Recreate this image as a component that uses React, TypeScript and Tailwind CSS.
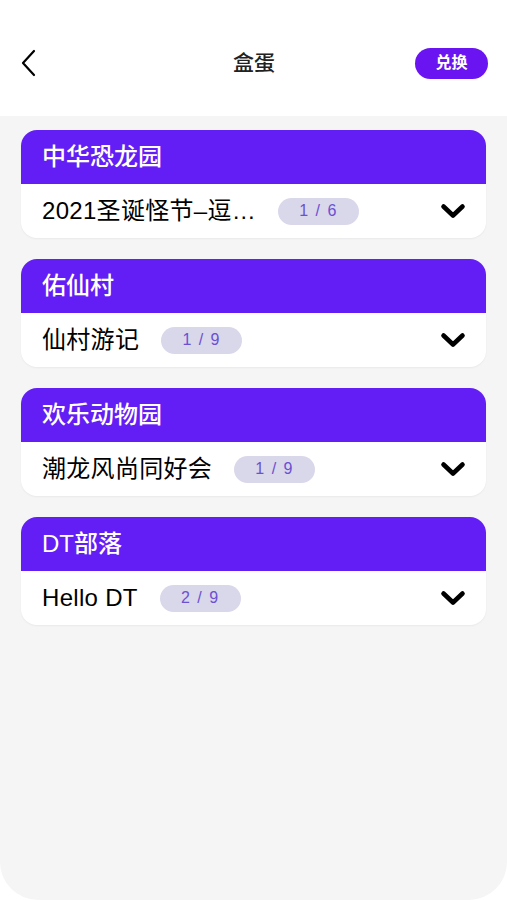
const groups = [
  { park: '中华恐龙园', name: '2021圣诞怪节–逗…', count: '1 / 6' },
  { park: '佑仙村', name: '仙村游记', count: '1 / 9' },
  { park: '欢乐动物园', name: '潮龙风尚同好会', count: '1 / 9' },
  { park: 'DT部落', name: 'Hello DT', count: '2 / 9' },
];

function ChevronDown() {
  return (
    <svg width="26" height="16" viewBox="0 0 26 16" fill="none">
      <path d="M3.5 3.5l9.5 9L22.5 3.5" stroke="#000" strokeWidth="4.6" strokeLinecap="round" strokeLinejoin="round" />
    </svg>
  );
}

function BackArrow() {
  return (
    <svg width="20" height="30" viewBox="0 0 20 30" fill="none">
      <path d="M15 3L4 15l11 12" stroke="#000" strokeWidth="2.2" strokeLinecap="round" strokeLinejoin="round" />
    </svg>
  );
}

export default function App() {
  const font = { fontFamily: '"Liberation Sans", "Noto Sans CJK SC", sans-serif' };
  return (
    <div className="w-[507px] h-[900px] bg-white overflow-hidden" style={font}>
      {/* Header */}
      <div className="h-[116px] bg-white flex items-center justify-between pl-[19px] pr-[19px] pt-[10px]">
        <BackArrow />
        <h1 className="text-[21px] font-medium text-[#222] ml-[54px]">盒蛋</h1>
        <button className="h-[31px] w-[73px] rounded-full bg-[#6a14f2] text-white text-[16px] font-bold flex items-center justify-center">
          兑换
        </button>
      </div>

      {/* List */}
      <div className="h-[784px] bg-[#f5f5f5] rounded-b-[38px] px-[21px] pt-[14px] flex flex-col gap-[21px]">
        {groups.map((g) => (
          <div key={g.park} className="rounded-[16px] overflow-hidden bg-white shadow-[0_1px_2px_rgba(0,0,0,0.05)]">
            <div className="h-[54px] bg-[#631df5] flex items-center px-[21px]">
              <span className="text-white text-[24px] font-medium leading-none">{g.park}</span>
            </div>
            <div className="h-[54px] flex items-center pl-[21px] pr-[20px]">
              <span className="text-[24px] text-black leading-none tracking-[0.3px]">{g.name}</span>
              <span className="ml-[22px] h-[27px] w-[81px] rounded-full bg-[#d9d7ea] text-[#6c50d2] text-[16px] tracking-[1.5px] flex items-center justify-center">
                {g.count}
              </span>
              <div className="ml-auto">
                <ChevronDown />
              </div>
            </div>
          </div>
        ))}
      </div>
    </div>
  );
}
